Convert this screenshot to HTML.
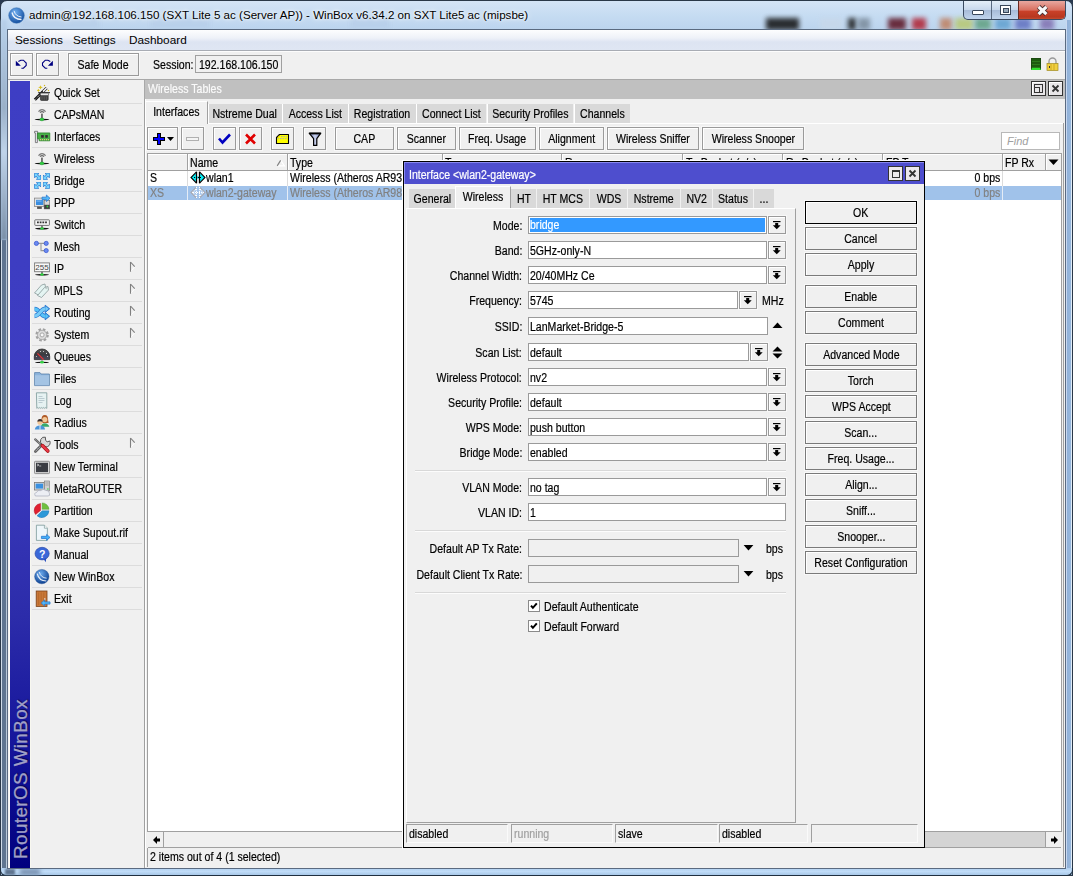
<!DOCTYPE html>
<html><head><meta charset="utf-8">
<style>
*{box-sizing:border-box;margin:0;padding:0}
html,body{width:1073px;height:876px;overflow:hidden;background:#2a3a50}
body{position:relative;font-family:"Liberation Sans",sans-serif;font-size:10.7px;color:#000;line-height:1}
.a{position:absolute}
.t{position:absolute;white-space:nowrap;line-height:13px}
.s{display:inline-block;font-size:12px;transform:scaleX(0.88);-webkit-text-stroke:0.2px currentColor}
.s.l{transform-origin:0 50%}.s.c{transform-origin:50% 50%}.s.r{transform-origin:100% 50%}
.btn{position:absolute;background:#f0f0f0;border:1px solid #9a9a9a;box-shadow:inset 1px 1px 0 #fff,0 0 0 1px #f8f8f8;text-align:center;white-space:nowrap}
svg{position:absolute;overflow:visible}
</style></head><body>
<div class="a" style="left:0px;top:0px;width:1073px;height:876px;background:linear-gradient(#d4e4f6,#c6dcf2 14px,#bcd4ee 28px,#aac6e6 100px,#aac6e6 100%);border:1px solid #2a3848;border-radius:7px 7px 0 0"></div>
<div class="a" style="left:20px;top:18px;width:80px;height:12px;background:#b8d0ea;filter:blur(2.5px);opacity:.85"></div>
<div class="a" style="left:150px;top:18px;width:60px;height:12px;background:#b8d0ea;filter:blur(2.5px);opacity:.85"></div>
<div class="a" style="left:350px;top:18px;width:40px;height:12px;background:#b8d0ea;filter:blur(2.5px);opacity:.85"></div>
<div class="a" style="left:766px;top:18px;width:33px;height:12px;background:#101010;filter:blur(2.5px);opacity:.85"></div>
<div class="a" style="left:820px;top:18px;width:22px;height:12px;background:#c8d8ea;filter:blur(2.5px);opacity:.85"></div>
<div class="a" style="left:848px;top:18px;width:8px;height:12px;background:#181818;filter:blur(2.5px);opacity:.85"></div>
<div class="a" style="left:858px;top:18px;width:12px;height:12px;background:#7a8a9a;filter:blur(2.5px);opacity:.85"></div>
<div class="a" style="left:888px;top:18px;width:18px;height:12px;background:#5a1020;filter:blur(2.5px);opacity:.85"></div>
<div class="a" style="left:912px;top:18px;width:14px;height:12px;background:#b02030;filter:blur(2.5px);opacity:.85"></div>
<div class="a" style="left:940px;top:18px;width:12px;height:12px;background:#c08060;filter:blur(2.5px);opacity:.85"></div>
<div class="a" style="left:955px;top:18px;width:18px;height:12px;background:#b8c870;filter:blur(2.5px);opacity:.85"></div>
<div class="a" style="left:975px;top:18px;width:16px;height:12px;background:#60a080;filter:blur(2.5px);opacity:.85"></div>
<div class="a" style="left:995px;top:18px;width:16px;height:12px;background:#60a0d0;filter:blur(2.5px);opacity:.85"></div>
<div class="a" style="left:1015px;top:18px;width:16px;height:12px;background:#6070c0;filter:blur(2.5px);opacity:.85"></div>
<div class="a" style="left:1040px;top:18px;width:14px;height:12px;background:#8070b0;filter:blur(2.5px);opacity:.85"></div>
<div class="a" style="left:1px;top:240px;width:6px;height:628px;background:linear-gradient(90deg,#d0dce8 0,#d0dce8 1px,#5f7590 1px,#5f7590 5px,#b8c8d8 5px,#b8c8d8 6px)"></div>
<div class="a" style="left:1px;top:20px;width:6px;height:220px;background:linear-gradient(#b8d0ea,#9ab0c8 40%,#c0d4ea 60%,#7a90a8 100%);filter:blur(1px)"></div>
<div class="a" style="left:1066px;top:20px;width:6px;height:848px;background:linear-gradient(90deg,#c8d8f0 0,#c8d8f0 1px,#90b0d8 1px,#98b8dc 5px,#e0ecf8 5px)"></div>
<div class="a" style="left:0px;top:868px;width:1073px;height:8px;background:linear-gradient(#b0d0f0,#c0dcf8 50%,#a8c8e8);border-bottom:1px solid #203040;border-left:1px solid #203040;border-right:1px solid #203040;border-radius:0 0 6px 6px"></div>
<div class="a" style="left:5px;top:869px;width:10px;height:6px;background:#5f7590;filter:blur(1px)"></div>
<div class="a" style="left:20px;top:869px;width:20px;height:6px;background:#7890b0;filter:blur(2px)"></div>
<svg style="left:8px;top:7px" width="17" height="17" viewBox="0 0 17 17"><defs><radialGradient id="g1" cx="40%" cy="30%" r="70%"><stop offset="0" stop-color="#70aef0"/><stop offset="1" stop-color="#1450a0"/></radialGradient></defs><circle cx="8.5" cy="8.5" r="7.8" fill="url(#g1)" stroke="#3a70b0" stroke-width=".5"/><path d="M4 5.5 Q5.5 12.5 13.5 12.5" stroke="#f0f4fa" stroke-width="1.3" fill="none"/><path d="M6 3.8 Q7.5 9.5 13.5 10" stroke="#f0f4fa" stroke-width="1" fill="none"/></svg>
<div class="t" style="left:29px;top:8px;font-size:11.6px;color:#000;text-shadow:0 0 6px #fff,0 0 3px #fff">admin@192.168.106.150 (SXT Lite 5 ac (Server AP)) - WinBox v6.34.2 on SXT Lite5 ac (mipsbe)</div>
<div class="a" style="left:963px;top:1px;width:103px;height:19px;border:1px solid #3a4a60;border-top:none;border-radius:0 0 5px 5px;overflow:hidden;background:linear-gradient(#e4eef8,#c8d8ec 48%,#a8bcd8 52%,#c0d4ec)">
 <div class="a" style="left:27px;top:0;width:1px;height:20px;background:#5a6a80"></div>
 <div class="a" style="left:54px;top:0;width:48px;height:20px;background:linear-gradient(#e8a8a0,#d87060 45%,#c84028 52%,#b83820 80%,#d06040);border-left:1px solid #6a2a20"></div>
 <div class="a" style="left:8px;top:9px;width:12px;height:5px;background:#fff;border:1px solid #39475a;border-radius:1px"></div>
 <div class="a" style="left:36px;top:4px;width:11px;height:10px;background:#fff;border:1px solid #39475a"></div>
 <div class="a" style="left:38.5px;top:6.5px;width:6px;height:5px;background:#9ab;border:1px solid #39475a"></div>
</div>
<svg style="left:1018px;top:4px" width="48" height="16"><path d="M20.6 2.8 L28.4 10.2 M28.4 2.8 L20.6 10.2" stroke="#4a3030" stroke-width="5"/><path d="M20.6 2.8 L28.4 10.2 M28.4 2.8 L20.6 10.2" stroke="#f8f8f8" stroke-width="3.2"/></svg>
<div class="a" style="left:7px;top:29px;width:1059px;height:840px;background:#f0f0f0;border:1px solid #5a6a80"></div>
<div class="a" style="left:8px;top:30px;width:1057px;height:20px;background:linear-gradient(#fdfdfe,#eef1f8 40%,#dde4f2 60%,#dfe6f3)"></div>
<div class="a" style="left:8px;top:50px;width:1057px;height:1px;background:#a8acb4"></div>
<div class="a" style="left:8px;top:51px;width:1057px;height:1px;background:#fcfcfc"></div>
<div class="t" style="left:15px;top:34px;font-size:11.8px;">Sessions</div>
<div class="t" style="left:73px;top:34px;font-size:11.8px;">Settings</div>
<div class="t" style="left:129px;top:34px;font-size:11.8px;">Dashboard</div>
<div class="btn" style="left:10px;top:53px;width:23px;height:23px"></div>
<div class="btn" style="left:36px;top:53px;width:23px;height:23px"></div>
<svg style="left:15px;top:58px" width="14" height="13"><path d="M3.4 3.6 L5.8 2.2 H8.4 L11.2 5 V7.4 L8.4 10.2 H6.4" stroke="#000080" stroke-width="1.1" fill="none"/><path d="M0.8 2.7 V7.7 H5.8z" fill="#000080"/></svg>
<svg style="left:41px;top:58px" width="14" height="13"><g transform="translate(12.7 0) scale(-1 1)"><path d="M3.4 3.6 L5.8 2.2 H8.4 L11.2 5 V7.4 L8.4 10.2 H6.4" stroke="#000080" stroke-width="1.1" fill="none"/><path d="M0.8 2.7 V7.7 H5.8z" fill="#000080"/></g></svg>
<div class="btn" style="left:68px;top:53px;width:71px;height:23px;line-height:21px;padding-top:1px"><span class="s c">Safe Mode</span></div>
<div class="t" style="left:153px;top:59px;"><span class="s l">Session:</span></div>
<div class="a" style="left:195px;top:55px;width:87px;height:18px;border:1px solid #a0a0a0;background:#f0f0f0;line-height:16px;padding-left:3px;padding-top:1px;white-space:nowrap"><span class="s l">192.168.106.150</span></div>
<div class="a" style="left:1031px;top:58px;width:10px;height:12px;background:repeating-linear-gradient(#1d5a10 0 2px,#2c7a1c 2px 3px);border:1px solid #1a4a10;border-bottom:2px solid #30e030"></div>
<svg style="left:1046px;top:57px" width="13" height="14"><path d="M3 7 V4.5 A3.5 3.5 0 0 1 10 4.5 V7" stroke="#999" stroke-width="1.3" fill="none"/><rect x="1" y="6.5" width="11" height="7" fill="#f0d040" stroke="#a08a20" stroke-width=".7"/><path d="M5 7v6M8 7v6" stroke="#c8a020" stroke-width=".8"/><rect x="3" y="9" width="1" height="2" fill="#333"/></svg>
<div class="a" style="left:8px;top:79px;width:1057px;height:1px;background:#a8a8a8"></div>
<div class="a" style="left:9px;top:81px;width:1px;height:787px;background:#fafaf5"></div>
<div class="a" style="left:10px;top:81px;width:20px;height:787px;background:linear-gradient(#3e3ec4,#3c3cc0 45%,#2c2caa 68%,#14149a 85%,#00007e 100%)"></div>
<div class="a" style="left:30px;top:81px;width:1px;height:787px;background:#f8f8f0"></div>
<div class="t" style="left:-59px;top:767px;width:160px;height:24px;transform:rotate(-90deg);color:#a0a0c8;font-size:18.8px;line-height:24px;text-align:center;letter-spacing:0.42px;-webkit-text-stroke:0.3px #a0a0c8;text-shadow:1px 1px 1px rgba(0,0,40,.6)">RouterOS WinBox</div>
<svg style="left:34px;top:84px" width="16" height="16" viewBox="0 0 16 16"><path d="M0.8 15.8 L12.6 4" stroke="#111" stroke-width="2.8"/><path d="M0.8 15.8 L7 9.6" stroke="#eee" stroke-width="1" stroke-dasharray="1 1"/><path d="M9 7.6 L12.6 4" stroke="#f4f4f4" stroke-width="1.6"/>
<rect x="6.4" y="8.8" width="7.8" height="7.6" rx="1" fill="#444" stroke="#222" stroke-width=".6"/><rect x="6.6" y="9.2" width="7.4" height="2" fill="#e8e8e8"/><rect x="4.2" y="8.1" width="11.8" height="1.1" fill="#333"/><path d="M8 12.5 v3.3 M10.3 12.5 v3.3 M12.5 12.5 v3.3" stroke="#666" stroke-width=".6"/>
<path d="M6.5 1.2 L7.2 2.7 L8.9 3.3 L7.2 3.9 L6.5 5.5 L5.8 3.9 L4.1 3.3 L5.8 2.7z" fill="#d8c020"/><path d="M4.4 4.8 L5 5.7 L6 6.3 L5 6.9 L4.4 7.9 L3.8 6.9 L2.8 6.3 L3.8 5.7z" fill="#d8c020"/><circle cx="10.5" cy="1.5" r=".7" fill="#d0b820"/><circle cx="14.5" cy="6.5" r=".7" fill="#d0b820"/></svg>
<div class="t" style="left:54px;top:87px;"><span class="s l">Quick Set</span></div>
<div class="a" style="left:32px;top:103px;width:110px;height:1px;background:#dcdcdc"></div>
<svg style="left:34px;top:106px" width="16" height="16" viewBox="0 0 16 16"><path d="M4.5 5.6 Q8 1.6 11.6 5.6" stroke="#777" stroke-width="1.3" fill="none"/><path d="M6 6.6 Q8 4.6 10.1 6.6" stroke="#666" stroke-width="1.2" fill="none"/>
<rect x="7" y="7.6" width="1.9" height="4.8" fill="#707070"/><ellipse cx="8" cy="13.5" rx="7.4" ry="0.8" fill="#111"/><ellipse cx="7.9" cy="13.4" rx="2" ry="1.4" fill="#30d040" stroke="#20a030" stroke-width=".5"/></svg>
<div class="t" style="left:54px;top:109px;"><span class="s l">CAPsMAN</span></div>
<div class="a" style="left:32px;top:125px;width:110px;height:1px;background:#dcdcdc"></div>
<svg style="left:34px;top:128px" width="16" height="16" viewBox="0 0 16 16"><path d="M0.6 3.3 H3.6 V5 H3.4 V14.6 H1.4 V5 H0.6z" fill="#e8e8f0" stroke="#666" stroke-width=".8"/>
<path d="M3.6 4.9 H15.8 V12.8 H5.2 V10.8 H3.6z" fill="#48b048" stroke="#1e7a1e" stroke-width=".7"/>
<rect x="7.1" y="7.1" width="2.7" height="2.6" fill="#332830"/><rect x="11.2" y="7.1" width="2.6" height="2.6" fill="#332830"/><path d="M5.9 11.7 h9.2" stroke="#e8c880" stroke-width="1.3" stroke-dasharray="1 1"/></svg>
<div class="t" style="left:54px;top:131px;"><span class="s l">Interfaces</span></div>
<div class="a" style="left:32px;top:147px;width:110px;height:1px;background:#dcdcdc"></div>
<svg style="left:34px;top:150px" width="16" height="16" viewBox="0 0 16 16"><path d="M4.5 5.6 Q8 1.6 11.6 5.6" stroke="#777" stroke-width="1.3" fill="none"/><path d="M6 6.6 Q8 4.6 10.1 6.6" stroke="#666" stroke-width="1.2" fill="none"/>
<rect x="7" y="7.6" width="1.9" height="4.8" fill="#707070"/><ellipse cx="8" cy="13.5" rx="7.4" ry="0.8" fill="#111"/><ellipse cx="7.9" cy="13.4" rx="2" ry="1.4" fill="#30d040" stroke="#20a030" stroke-width=".5"/></svg>
<div class="t" style="left:54px;top:153px;"><span class="s l">Wireless</span></div>
<div class="a" style="left:32px;top:169px;width:110px;height:1px;background:#dcdcdc"></div>
<svg style="left:34px;top:172px" width="16" height="16" viewBox="0 0 16 16"><g transform="translate(0.2 1) scale(1 1)"><g fill="#2a78d0" stroke="#2a78d0" stroke-width="1.1" stroke-linejoin="round"><path d="M0.5 0.5 L4.3 0.5 L0.5 4.3z M6.3 6.3 L2.5 6.3 L6.3 2.5z"/><path d="M1.8 1.8 L5 5" stroke-width="2.7"/></g><g fill="#78d4fc" stroke="#78d4fc"><path stroke="none" d="M0.5 0.5 L4.3 0.5 L0.5 4.3z M6.3 6.3 L2.5 6.3 L6.3 2.5z"/><path d="M1.8 1.8 L5 5" stroke-width="1.6"/></g></g><g transform="translate(15.8 1) scale(-1 1)"><g fill="#2a78d0" stroke="#2a78d0" stroke-width="1.1" stroke-linejoin="round"><path d="M0.5 0.5 L4.3 0.5 L0.5 4.3z M6.3 6.3 L2.5 6.3 L6.3 2.5z"/><path d="M1.8 1.8 L5 5" stroke-width="2.7"/></g><g fill="#78d4fc" stroke="#78d4fc"><path stroke="none" d="M0.5 0.5 L4.3 0.5 L0.5 4.3z M6.3 6.3 L2.5 6.3 L6.3 2.5z"/><path d="M1.8 1.8 L5 5" stroke-width="1.6"/></g></g><g transform="translate(0.2 16.8) scale(1 -1)"><g fill="#2a78d0" stroke="#2a78d0" stroke-width="1.1" stroke-linejoin="round"><path d="M0.5 0.5 L4.3 0.5 L0.5 4.3z M6.3 6.3 L2.5 6.3 L6.3 2.5z"/><path d="M1.8 1.8 L5 5" stroke-width="2.7"/></g><g fill="#78d4fc" stroke="#78d4fc"><path stroke="none" d="M0.5 0.5 L4.3 0.5 L0.5 4.3z M6.3 6.3 L2.5 6.3 L6.3 2.5z"/><path d="M1.8 1.8 L5 5" stroke-width="1.6"/></g></g><g transform="translate(15.8 16.8) scale(-1 -1)"><g fill="#2a78d0" stroke="#2a78d0" stroke-width="1.1" stroke-linejoin="round"><path d="M0.5 0.5 L4.3 0.5 L0.5 4.3z M6.3 6.3 L2.5 6.3 L6.3 2.5z"/><path d="M1.8 1.8 L5 5" stroke-width="2.7"/></g><g fill="#78d4fc" stroke="#78d4fc"><path stroke="none" d="M0.5 0.5 L4.3 0.5 L0.5 4.3z M6.3 6.3 L2.5 6.3 L6.3 2.5z"/><path d="M1.8 1.8 L5 5" stroke-width="1.6"/></g></g></svg>
<div class="t" style="left:54px;top:175px;"><span class="s l">Bridge</span></div>
<div class="a" style="left:32px;top:191px;width:110px;height:1px;background:#dcdcdc"></div>
<svg style="left:34px;top:194px" width="16" height="16" viewBox="0 0 16 16"><rect x="0.4" y="4.1" width="9.6" height="8.4" fill="#e4e4e4" stroke="#888" stroke-width=".8"/><rect x="2" y="5.9" width="7.2" height="5.1" fill="#3a8ee0"/><rect x="2.5" y="6.6" width="5" height="1" fill="#80b8f0"/><rect x="3.1" y="12.6" width="4.7" height="2.3" fill="#555"/>
<rect x="10.2" y="6.3" width="5.5" height="8.6" fill="#d8d8d8" stroke="#666" stroke-width=".6"/><rect x="10.2" y="10.8" width="5.5" height="4.1" fill="#404040"/><circle cx="13.4" cy="12.5" r=".9" fill="#30d040"/><path d="M8 3.15 H12.4 V1.0 L16 4.3 L12.4 7.6 V5.449999999999999 H8z" fill="#50b8f8" stroke="#2a78d0" stroke-width=".8" stroke-linejoin="round"/></svg>
<div class="t" style="left:54px;top:197px;"><span class="s l">PPP</span></div>
<div class="a" style="left:32px;top:213px;width:110px;height:1px;background:#dcdcdc"></div>
<svg style="left:34px;top:216px" width="16" height="16" viewBox="0 0 16 16"><rect x="0.8" y="3.8" width="14.6" height="5.6" rx=".6" fill="#f6f6f6" stroke="#666" stroke-width=".9"/><path d="M3 6.4 h10" stroke="#333" stroke-width="1.6" stroke-dasharray="1.8 0.9"/>
<rect x="7.2" y="9.4" width="1.6" height="2.6" fill="#666"/><ellipse cx="8" cy="12.6" rx="7" ry=".8" fill="#111"/><ellipse cx="8" cy="12.5" rx="1.7" ry="1.2" fill="#30d040"/></svg>
<div class="t" style="left:54px;top:219px;"><span class="s l">Switch</span></div>
<div class="a" style="left:32px;top:235px;width:110px;height:1px;background:#dcdcdc"></div>
<svg style="left:34px;top:238px" width="16" height="16" viewBox="0 0 16 16"><path d="M2.4 5.4 H12.2 M7 5.4 V12.6 H12.2" stroke="#999" stroke-width="1.1" fill="none"/><g fill="#6a8af0" stroke="#3050d0" stroke-width=".7"><circle cx="2.4" cy="5.4" r="2.1"/><circle cx="12.2" cy="5.4" r="2.1"/><circle cx="12.2" cy="12.6" r="2.1"/></g></svg>
<div class="t" style="left:54px;top:241px;"><span class="s l">Mesh</span></div>
<div class="a" style="left:32px;top:257px;width:110px;height:1px;background:#dcdcdc"></div>
<svg style="left:34px;top:260px" width="16" height="16" viewBox="0 0 16 16"><rect x="0.6" y="2.9" width="14.8" height="8.8" fill="#f8f8f8" stroke="#777" stroke-width=".9"/><text x="8" y="10" font-size="8" text-anchor="middle" fill="#444" font-family="Liberation Sans">255</text>
<rect x="7.2" y="11.7" width="1.6" height="2.4" fill="#666"/><ellipse cx="8" cy="14.7" rx="7" ry=".8" fill="#111"/><ellipse cx="8" cy="14.5" rx="1.7" ry="1.2" fill="#30d040"/></svg>
<div class="t" style="left:54px;top:263px;"><span class="s l">IP</span></div>
<div class="a" style="left:32px;top:279px;width:110px;height:1px;background:#dcdcdc"></div>
<svg style="left:128px;top:261px" width="10" height="14"><path d="M2.5 10.7 L6.7 5.9" stroke="#fff" stroke-width="1"/><path d="M2.5 1 V10.7 M2.5 1 L6.7 5.7" stroke="#808080" stroke-width="1.1" fill="none"/></svg>
<svg style="left:34px;top:282px" width="16" height="16" viewBox="0 0 16 16"><g fill="#e4f4f2" stroke="#8a9a9a" stroke-width=".8" stroke-linejoin="round"><path d="M0.5 11 L7.5 3 L11 2 L11.5 5.5 L4.5 13z"/><path d="M3.5 13.5 L10.5 5.5 L14 4.5 L14.5 8 L7.5 15.5z"/></g><circle cx="12.3" cy="6" r=".7" fill="#fff" stroke="#899" stroke-width=".5"/></svg>
<div class="t" style="left:54px;top:285px;"><span class="s l">MPLS</span></div>
<div class="a" style="left:32px;top:301px;width:110px;height:1px;background:#dcdcdc"></div>
<svg style="left:128px;top:283px" width="10" height="14"><path d="M2.5 10.7 L6.7 5.9" stroke="#fff" stroke-width="1"/><path d="M2.5 1 V10.7 M2.5 1 L6.7 5.7" stroke="#808080" stroke-width="1.1" fill="none"/></svg>
<svg style="left:34px;top:304px" width="16" height="16" viewBox="0 0 16 16"><path d="M0.6 5 C5.5 5, 6.5 12.4, 11.6 12.4" stroke="#2a78d0" stroke-width="4.4" fill="none"/><path d="M11.2 8.6 L15.6 12.2 L11.2 15.8z" fill="#2a78d0" stroke="#2a78d0" stroke-width="1" stroke-linejoin="round"/>
<path d="M0.6 5 C5.5 5, 6.5 12.4, 11.6 12.4" stroke="#58c4f8" stroke-width="3" fill="none"/><path d="M11.6 9.6 L14.6 12.2 L11.6 14.8z" fill="#58c4f8"/>
<path d="M0.6 12 C5.5 12, 6.5 4.8, 11.6 4.8" stroke="#2a78d0" stroke-width="4.4" fill="none"/><path d="M11.2 1.2 L15.6 4.8 L11.2 8.4z" fill="#2a78d0" stroke="#2a78d0" stroke-width="1" stroke-linejoin="round"/>
<path d="M0.6 12 C5.5 12, 6.5 4.8, 11.6 4.8" stroke="#78ccf8" stroke-width="3" fill="none"/><path d="M11.6 2.2 L14.6 4.8 L11.6 7.4z" fill="#78ccf8"/></svg>
<div class="t" style="left:54px;top:307px;"><span class="s l">Routing</span></div>
<div class="a" style="left:32px;top:323px;width:110px;height:1px;background:#dcdcdc"></div>
<svg style="left:128px;top:305px" width="10" height="14"><path d="M2.5 10.7 L6.7 5.9" stroke="#fff" stroke-width="1"/><path d="M2.5 1 V10.7 M2.5 1 L6.7 5.7" stroke="#808080" stroke-width="1.1" fill="none"/></svg>
<svg style="left:34px;top:326px" width="16" height="16" viewBox="0 0 16 16"><g transform="translate(8.1 8.9)"><circle r="5.2" fill="#d8d8d8" stroke="#a0a0a0" stroke-width="3" stroke-dasharray="2.4 1.7"/><circle r="4.6" fill="#dcdcdc" stroke="#a8a8a8" stroke-width=".8"/><circle r="2" fill="#f8f8f8" stroke="#999" stroke-width=".8"/></g></svg>
<div class="t" style="left:54px;top:329px;"><span class="s l">System</span></div>
<div class="a" style="left:32px;top:345px;width:110px;height:1px;background:#dcdcdc"></div>
<svg style="left:128px;top:327px" width="10" height="14"><path d="M2.5 10.7 L6.7 5.9" stroke="#fff" stroke-width="1"/><path d="M2.5 1 V10.7 M2.5 1 L6.7 5.7" stroke="#808080" stroke-width="1.1" fill="none"/></svg>
<svg style="left:34px;top:348px" width="16" height="16" viewBox="0 0 16 16"><defs><linearGradient id="qg" x1="0" y1="0" x2="0" y2="1"><stop offset="0" stop-color="#555"/><stop offset=".5" stop-color="#3a3a3e"/><stop offset="1" stop-color="#4a4a60"/></linearGradient></defs><path d="M0.3 11.6 V8.4 A7.7 7.4 0 0 1 15.7 8.4 V11.6z" fill="url(#qg)" stroke="#1a1a1a" stroke-width=".7"/>
<g fill="#ddd"><circle cx="2.4" cy="8.5" r=".55"/><circle cx="6.5" cy="3.5" r=".55"/><circle cx="9.5" cy="3.5" r=".55"/><circle cx="12.5" cy="5.4" r=".55"/><circle cx="13.6" cy="8.5" r=".55"/></g>
<path d="M3.4 5.4 L9.6 11.6" stroke="#e83030" stroke-width="1.3"/><rect x="7.3" y="11.8" width="1.4" height="1.8" fill="#999"/><ellipse cx="8" cy="14.4" rx="7" ry=".7" fill="#111"/><ellipse cx="8" cy="14.3" rx="2" ry="1.3" fill="#30d040"/></svg>
<div class="t" style="left:54px;top:351px;"><span class="s l">Queues</span></div>
<div class="a" style="left:32px;top:367px;width:110px;height:1px;background:#dcdcdc"></div>
<svg style="left:34px;top:370px" width="16" height="16" viewBox="0 0 16 16"><path d="M0.6 2.6 H6 L7 4 H15.4 V15.6 H0.6z" fill="#8cb4dc" stroke="#5a82aa" stroke-width=".8"/><rect x="1" y="5.2" width="14" height="10" fill="#a4c4e4"/></svg>
<div class="t" style="left:54px;top:373px;"><span class="s l">Files</span></div>
<div class="a" style="left:32px;top:389px;width:110px;height:1px;background:#dcdcdc"></div>
<svg style="left:34px;top:392px" width="16" height="16" viewBox="0 0 16 16"><path d="M2.4 0.8 H12.8 V16.4 l-1 -.9 -1 .9 -1 -.9 -1 .9 -1 -.9 -1 .9 -1 -.9 -1 .9 -1 -.9 -1 .9z" fill="#e6f2f2" stroke="#7a9898" stroke-width=".8"/><path d="M4.5 4.5h4M4.5 6.5h6M4.5 8.5h6M4.5 10.5h4" stroke="#b0c0c8" stroke-width=".8"/></svg>
<div class="t" style="left:54px;top:395px;"><span class="s l">Log</span></div>
<div class="a" style="left:32px;top:411px;width:110px;height:1px;background:#dcdcdc"></div>
<svg style="left:34px;top:414px" width="16" height="16" viewBox="0 0 16 16"><path d="M7.4 6.2 Q7.4 1 10.8 1 Q14.2 1 14.2 6.2 L14.6 9 H7z" fill="#b05a28"/><circle cx="10.8" cy="5.6" r="2.6" fill="#f2c898"/><path d="M7 12.8 Q7.4 9.2 10.8 9.2 Q14.2 9.2 15.4 12.8z" fill="#38a868"/>
<circle cx="6" cy="8.2" r="2.6" fill="#f2c898"/><path d="M3.4 7.8 Q3.4 5 6 5 Q8.6 5 8.6 7.8 Q6 6.6 3.4 7.8z" fill="#3a3030"/><path d="M0.8 15.6 Q1.4 11.4 6 11.4 Q10.6 11.4 11 15.6z" fill="#4a94d8"/><path d="M6 11.6 v4" stroke="#fff" stroke-width=".8"/></svg>
<div class="t" style="left:54px;top:417px;"><span class="s l">Radius</span></div>
<div class="a" style="left:32px;top:433px;width:110px;height:1px;background:#dcdcdc"></div>
<svg style="left:34px;top:436px" width="16" height="16" viewBox="0 0 16 16"><path d="M1.2 3.4 L7.6 9.2" stroke="#606060" stroke-width="2.2" stroke-linecap="round"/><path d="M1.2 3.4 L7.6 9.2" stroke="#e0e0e0" stroke-width=".7" stroke-dasharray="1 .8"/>
<path d="M1.4 15.4 L9 7.8" stroke="#606060" stroke-width="2.8" stroke-linecap="round"/><path d="M1.6 15.2 L8.8 8" stroke="#e8e8f0" stroke-width="1" stroke-dasharray="1 .8"/>
<path d="M8.2 8.4 A4 4 0 0 1 11.4 1.2 L11.6 4.4 L13.2 5.8 L15.8 5 A4 4 0 0 1 8.2 8.4z" fill="#d8d8d8" stroke="#5a5a5a" stroke-width="1" stroke-linejoin="round"/>
<path d="M8.4 9.6 L13.8 15" stroke="#a01010" stroke-width="3.6" stroke-linecap="round"/><path d="M8.4 9.6 L13.8 15" stroke="#e83848" stroke-width="2.2" stroke-linecap="round"/></svg>
<div class="t" style="left:54px;top:439px;"><span class="s l">Tools</span></div>
<div class="a" style="left:32px;top:455px;width:110px;height:1px;background:#dcdcdc"></div>
<svg style="left:128px;top:437px" width="10" height="14"><path d="M2.5 10.7 L6.7 5.9" stroke="#fff" stroke-width="1"/><path d="M2.5 1 V10.7 M2.5 1 L6.7 5.7" stroke="#808080" stroke-width="1.1" fill="none"/></svg>
<svg style="left:34px;top:458px" width="16" height="16" viewBox="0 0 16 16"><rect x="0.5" y="3.3" width="15" height="12.3" rx=".8" fill="#d8d8d8" stroke="#888" stroke-width=".9"/><rect x="2" y="4.8" width="12" height="9.3" fill="#3a3c42"/><path d="M3 6 l2 1 -2 1M5.2 8h2" stroke="#e0e0e0" stroke-width=".7" fill="none"/></svg>
<div class="t" style="left:54px;top:461px;"><span class="s l">New Terminal</span></div>
<div class="a" style="left:32px;top:477px;width:110px;height:1px;background:#dcdcdc"></div>
<svg style="left:34px;top:480px" width="16" height="16" viewBox="0 0 16 16"><rect x="0.5" y="2.4" width="9.6" height="7.6" fill="#e0e0e0" stroke="#777" stroke-width=".8"/><rect x="1.6" y="3.6" width="7.4" height="5" fill="#3a90e0"/><rect x="10.6" y="1" width="5" height="10" fill="#d0d0d0" stroke="#777" stroke-width=".6"/><path d="M11.4 3h3.4M11.4 5h3.4" stroke="#888" stroke-width=".6"/><circle cx="13.9" cy="9" r=".7" fill="#30d040"/>
<path d="M1.4 16 Q-0.4 13 2.6 12.4 Q3.6 9.6 6.8 10.6 Q9 8.2 12 10.4 Q15.6 10.4 15.4 13.4 Q16.4 16 14 16z" fill="#eceef4" stroke="#9aa0b0" stroke-width=".6"/></svg>
<div class="t" style="left:54px;top:483px;"><span class="s l">MetaROUTER</span></div>
<div class="a" style="left:32px;top:499px;width:110px;height:1px;background:#dcdcdc"></div>
<svg style="left:34px;top:502px" width="16" height="16" viewBox="0 0 16 16"><path d="M6.6 1.4 A7 7 0 0 0 1.6 12.6 L6.6 8.4z" fill="#e02030" stroke="#a01020" stroke-width=".4"/><path d="M8.2 0.9 A7 7 0 0 1 15 7.3 L8.2 7.3z" fill="#70c040" stroke="#409020" stroke-width=".4"/><path d="M15 8.8 A7.2 7.2 0 0 1 3 13.8 L8.2 8.8z" fill="#2c98d8" stroke="#1868a8" stroke-width=".4"/></svg>
<div class="t" style="left:54px;top:505px;"><span class="s l">Partition</span></div>
<div class="a" style="left:32px;top:521px;width:110px;height:1px;background:#dcdcdc"></div>
<svg style="left:34px;top:524px" width="16" height="16" viewBox="0 0 16 16"><path d="M2.4 1.2 H10.4 L13.4 4.2 V16.4 H2.4z" fill="#eef6fa" stroke="#7a9898" stroke-width=".8"/><path d="M10.4 1.2 V4.2 H13.4" fill="#fff" stroke="#7a9898" stroke-width=".7"/><path d="M7.4 12.3 H12.6 V10.4 L16 13.4 L12.6 16.4 V14.5 H7.4z" fill="#40b0f8" stroke="#2a78d0" stroke-width=".8" stroke-linejoin="round"/></svg>
<div class="t" style="left:54px;top:527px;"><span class="s l">Make Supout.rif</span></div>
<div class="a" style="left:32px;top:543px;width:110px;height:1px;background:#dcdcdc"></div>
<svg style="left:34px;top:546px" width="16" height="16" viewBox="0 0 16 16"><ellipse cx="8.1" cy="7.6" rx="7.1" ry="6.3" fill="#3a68d8" stroke="#2040a0" stroke-width=".6"/><path d="M9.5 13 L11.8 16.2 L12.2 12z" fill="#2a50c0"/><text x="8.1" y="11.6" font-size="10.5" font-weight="bold" text-anchor="middle" fill="#fff" font-family="Liberation Sans">?</text></svg>
<div class="t" style="left:54px;top:549px;"><span class="s l">Manual</span></div>
<div class="a" style="left:32px;top:565px;width:110px;height:1px;background:#dcdcdc"></div>
<svg style="left:34px;top:568px" width="16" height="16" viewBox="0 0 16 16"><defs><radialGradient id="wbg" cx="40%" cy="30%" r="70%"><stop offset="0" stop-color="#70aef0"/><stop offset="1" stop-color="#0c4090"/></radialGradient></defs><circle cx="7.8" cy="8.6" r="7.2" fill="url(#wbg)" stroke="#1a4a90" stroke-width=".4"/><path d="M3.2 5.6 Q4.8 12.8 12.4 13" stroke="#e8eef8" stroke-width="1.2" fill="none"/><path d="M5.2 4 Q7 9.8 12.6 10.2" stroke="#e8eef8" stroke-width=".9" fill="none"/></svg>
<div class="t" style="left:54px;top:571px;"><span class="s l">New WinBox</span></div>
<div class="a" style="left:32px;top:587px;width:110px;height:1px;background:#dcdcdc"></div>
<svg style="left:34px;top:590px" width="16" height="16" viewBox="0 0 16 16"><rect x="2.2" y="1" width="10.8" height="15.4" fill="#c87838" stroke="#7a4018" stroke-width=".8"/><path d="M4.6 2.5v12.5M7.2 2.5v12.5M9.8 2.5v12.5" stroke="#a85c20" stroke-width=".5"/><circle cx="10.8" cy="9" r=".8" fill="#f0f0f0"/><path d="M16 11.9 H10.6 V10 L7.2 13 L10.6 16 V14.1 H16z" fill="#50b8f8" stroke="#2a78d0" stroke-width=".8" stroke-linejoin="round"/></svg>
<div class="t" style="left:54px;top:593px;"><span class="s l">Exit</span></div>
<div class="a" style="left:32px;top:609px;width:110px;height:1px;background:#dcdcdc"></div>
<div class="a" style="left:144px;top:80px;width:1px;height:788px;background:#a8a8a8"></div>
<div class="a" style="left:145px;top:80px;width:920px;height:19px;background:#c0c0c0"></div>
<div class="t" style="left:148px;top:83px;color:#fafafa"><span class="s l">Wireless Tables</span></div>
<div class="a" style="left:1031px;top:81px;width:15px;height:15px;background:#e8e6e8;border:1px solid #333;box-shadow:inset 1px 1px 0 #fff"></div>
<svg style="left:1031px;top:81px" width="15" height="15"><rect x="3.5" y="3.5" width="8" height="8" fill="none" stroke="#333" stroke-width="1"/><rect x="3.5" y="6.5" width="5" height="5" fill="none" stroke="#333" stroke-width="1"/></svg>
<div class="a" style="left:1048px;top:81px;width:15px;height:15px;background:#e8e6e8;border:1px solid #333;box-shadow:inset 1px 1px 0 #fff"></div>
<svg style="left:1048px;top:81px" width="15" height="15"><path d="M4.5 4.5 L10.5 10.5 M10.5 4.5 L4.5 10.5" stroke="#333" stroke-width="1.8"/></svg>
<div class="a" style="left:144px;top:99px;width:1px;height:768px;background:#a0a0a0"></div>
<div class="a" style="left:145px;top:99px;width:1px;height:768px;background:#fff"></div>
<div class="a" style="left:1063px;top:123px;width:1px;height:744px;background:#a0a0a0"></div>
<div class="a" style="left:145px;top:101px;width:63px;height:23px;background:#f0f0f0;border-left:1px solid #fff;border-top:1px solid #fff;border-right:1px solid #a0a0a0"></div>
<div class="t" style="left:145px;top:106px;width:63px;text-align:center"><span class="s c">Interfaces</span></div>
<div class="a" style="left:208px;top:104px;width:74px;height:19px;background:#d9d9d9;border-left:1px solid #fff"></div>
<div class="t" style="left:208px;top:108px;width:74px;text-align:center"><span class="s c">Nstreme Dual</span></div>
<div class="a" style="left:282px;top:104px;width:66px;height:19px;background:#d9d9d9;border-left:1px solid #fff"></div>
<div class="t" style="left:282px;top:108px;width:66px;text-align:center"><span class="s c">Access List</span></div>
<div class="a" style="left:348px;top:104px;width:68px;height:19px;background:#d9d9d9;border-left:1px solid #fff"></div>
<div class="t" style="left:348px;top:108px;width:68px;text-align:center"><span class="s c">Registration</span></div>
<div class="a" style="left:416px;top:104px;width:70px;height:19px;background:#d9d9d9;border-left:1px solid #fff"></div>
<div class="t" style="left:416px;top:108px;width:70px;text-align:center"><span class="s c">Connect List</span></div>
<div class="a" style="left:487px;top:104px;width:86px;height:19px;background:#d9d9d9;border-left:1px solid #fff"></div>
<div class="t" style="left:487px;top:108px;width:86px;text-align:center"><span class="s c">Security Profiles</span></div>
<div class="a" style="left:574px;top:104px;width:56px;height:19px;background:#d9d9d9;border-left:1px solid #fff"></div>
<div class="t" style="left:574px;top:108px;width:56px;text-align:center"><span class="s c">Channels</span></div>
<div class="a" style="left:208px;top:123px;width:855px;height:1px;background:#fff"></div>
<div class="btn" style="left:147px;top:127px;width:31px;height:23px;line-height:21px;padding-top:1px"></div>
<div class="btn" style="left:181px;top:127px;width:23px;height:23px;line-height:21px;padding-top:1px"></div>
<div class="btn" style="left:213px;top:127px;width:23px;height:23px;line-height:21px;padding-top:1px"></div>
<div class="btn" style="left:239px;top:127px;width:23px;height:23px;line-height:21px;padding-top:1px"></div>
<div class="btn" style="left:271px;top:127px;width:23px;height:23px;line-height:21px;padding-top:1px"></div>
<div class="btn" style="left:303px;top:127px;width:23px;height:23px;line-height:21px;padding-top:1px"></div>
<div class="btn" style="left:335px;top:127px;width:59px;height:23px;line-height:21px;padding-top:1px"><span class="s c">CAP</span></div>
<div class="btn" style="left:397px;top:127px;width:59px;height:23px;line-height:21px;padding-top:1px"><span class="s c">Scanner</span></div>
<div class="btn" style="left:459px;top:127px;width:77px;height:23px;line-height:21px;padding-top:1px"><span class="s c">Freq. Usage</span></div>
<div class="btn" style="left:539px;top:127px;width:65px;height:23px;line-height:21px;padding-top:1px"><span class="s c">Alignment</span></div>
<div class="btn" style="left:607px;top:127px;width:92px;height:23px;line-height:21px;padding-top:1px"><span class="s c">Wireless Sniffer</span></div>
<div class="btn" style="left:702px;top:127px;width:102px;height:23px;line-height:21px;padding-top:1px"><span class="s c">Wireless Snooper</span></div>
<svg style="left:153px;top:133px" width="24" height="13"><path d="M6 0v12M0 6h12" stroke="#000" stroke-width="4"/><path d="M6 1v10M1 6h10" stroke="#0000ff" stroke-width="2"/><path d="M14 4h7l-3.5 4z" fill="#000"/></svg>
<svg style="left:185px;top:133px" width="16" height="12"><rect x="1.5" y="4.5" width="12" height="3" fill="#f4f4f4" stroke="#b0b0b0"/></svg>
<svg style="left:217px;top:132px" width="16" height="14"><path d="M2 6.5 L5.5 10.5 L13 2.5" stroke="#0000c0" stroke-width="2.6" fill="none"/></svg>
<svg style="left:243px;top:132px" width="16" height="14"><path d="M3 2.5 L12 11.5 M12 2.5 L3 11.5" stroke="#e00000" stroke-width="2.6"/></svg>
<svg style="left:275px;top:133px" width="16" height="13"><path d="M1.5 4.5 L4.5 1.5 H13.5 V10.5 H1.5z" fill="#ffff00" stroke="#000" stroke-width="1.1" stroke-linejoin="round"/><circle cx="3.6" cy="3.6" r=".8" fill="#d8c000"/><path d="M6 3.6h6M2.5 5.6h9.5" stroke="#a8a8c0" stroke-width=".9" stroke-dasharray="1.6 .9"/></svg>
<svg style="left:307px;top:131px" width="16" height="16"><defs><linearGradient id="fg" x1="0" x2="1"><stop offset="0" stop-color="#6a78b0"/><stop offset=".5" stop-color="#c8d0ec"/><stop offset="1" stop-color="#7a88c0"/></linearGradient></defs><path d="M2.2 2.2 H13.8 L9.8 7.6 V14.4 H6.6 V7.6z" fill="url(#fg)" stroke="#000" stroke-width="1.2" stroke-linejoin="round"/><path d="M2.5 2.6 H13.5" stroke="#000" stroke-width="1.6"/></svg>
<div class="a" style="left:1001px;top:132px;width:59px;height:18px;border:1px solid #b8b8b8;background:#fff;color:#a0a0a0;font-style:italic;padding-left:5px;line-height:16px;font-size:11px">Find</div>
<div class="a" style="left:147px;top:153px;width:915px;height:679px;background:#fff;border-left:1px solid #a0a0a0;border-top:1px solid #a0a0a0;border-right:1px solid #a0a0a0"></div>
<div class="a" style="left:148px;top:154px;width:913px;height:16px;background:#f0f0f0;border-top:1px solid #fff"></div>
<div class="a" style="left:148px;top:170px;width:913px;height:1px;background:#a0a0a0"></div>
<div class="a" style="left:187px;top:154px;width:1px;height:16px;background:#a0a0a0"></div>
<div class="a" style="left:188px;top:155px;width:1px;height:15px;background:#fff"></div>
<div class="a" style="left:287px;top:154px;width:1px;height:16px;background:#a0a0a0"></div>
<div class="a" style="left:288px;top:155px;width:1px;height:15px;background:#fff"></div>
<div class="a" style="left:442px;top:154px;width:1px;height:16px;background:#a0a0a0"></div>
<div class="a" style="left:443px;top:155px;width:1px;height:15px;background:#fff"></div>
<div class="a" style="left:561px;top:154px;width:1px;height:16px;background:#a0a0a0"></div>
<div class="a" style="left:562px;top:155px;width:1px;height:15px;background:#fff"></div>
<div class="a" style="left:682px;top:154px;width:1px;height:16px;background:#a0a0a0"></div>
<div class="a" style="left:683px;top:155px;width:1px;height:15px;background:#fff"></div>
<div class="a" style="left:782px;top:154px;width:1px;height:16px;background:#a0a0a0"></div>
<div class="a" style="left:783px;top:155px;width:1px;height:15px;background:#fff"></div>
<div class="a" style="left:882px;top:154px;width:1px;height:16px;background:#a0a0a0"></div>
<div class="a" style="left:883px;top:155px;width:1px;height:15px;background:#fff"></div>
<div class="a" style="left:1002px;top:154px;width:1px;height:16px;background:#a0a0a0"></div>
<div class="a" style="left:1003px;top:155px;width:1px;height:15px;background:#fff"></div>
<div class="a" style="left:1045px;top:154px;width:1px;height:16px;background:#a0a0a0"></div>
<div class="a" style="left:1046px;top:155px;width:1px;height:15px;background:#fff"></div>
<div class="a" style="left:187px;top:171px;width:1px;height:15px;background:#dcdcdc"></div>
<div class="a" style="left:287px;top:171px;width:1px;height:15px;background:#dcdcdc"></div>
<div class="a" style="left:442px;top:171px;width:1px;height:15px;background:#dcdcdc"></div>
<div class="a" style="left:561px;top:171px;width:1px;height:15px;background:#dcdcdc"></div>
<div class="a" style="left:682px;top:171px;width:1px;height:15px;background:#dcdcdc"></div>
<div class="a" style="left:782px;top:171px;width:1px;height:15px;background:#dcdcdc"></div>
<div class="a" style="left:882px;top:171px;width:1px;height:15px;background:#dcdcdc"></div>
<div class="a" style="left:1002px;top:171px;width:1px;height:15px;background:#dcdcdc"></div>
<div class="t" style="left:190px;top:157px;"><span class="s l">Name</span></div>
<div class="t" style="left:290px;top:157px;"><span class="s l">Type</span></div>
<svg style="left:276px;top:159px" width="10" height="9"><path d="M4.6 1.4 L8.6 6.9 H1.2" stroke="#fff" stroke-width="1.1" fill="none"/><path d="M4.6 1.4 L1.2 6.9" stroke="#808080" stroke-width="1.1"/></svg>
<div class="t" style="left:445px;top:157px;"><span class="s l">T</span></div>
<div class="t" style="left:565px;top:157px;"><span class="s l">R</span></div>
<div class="t" style="left:686px;top:157px;"><span class="s l">Tx Packet (p/s)</span></div>
<div class="t" style="left:786px;top:157px;"><span class="s l">Rx Packet (p/s)</span></div>
<div class="t" style="left:886px;top:157px;"><span class="s l">FP Tx</span></div>
<div class="t" style="left:1005px;top:157px;"><span class="s l">FP Rx</span></div>
<svg style="left:1048px;top:159px" width="11" height="7"><path d="M0.5 0.5h10l-5 5.5z" fill="#000"/></svg>
<div class="t" style="left:150px;top:172px;"><span class="s l">S</span></div>
<div class="t" style="left:206px;top:172px;"><span class="s l">wlan1</span></div>
<div class="t" style="left:290px;top:172px;"><span class="s l">Wireless (Atheros AR9300)</span></div>
<div class="t" style="left:944px;top:172px;width:56px;text-align:right"><span class="s r">0 bps</span></div>
<div class="a" style="left:148px;top:186px;width:913px;height:14px;background:#a0c2ea"></div>
<div class="a" style="left:187px;top:186px;width:1px;height:14px;background:#e4ecf6"></div>
<div class="a" style="left:287px;top:186px;width:1px;height:14px;background:#e4ecf6"></div>
<div class="a" style="left:442px;top:186px;width:1px;height:14px;background:#e4ecf6"></div>
<div class="a" style="left:561px;top:186px;width:1px;height:14px;background:#e4ecf6"></div>
<div class="a" style="left:682px;top:186px;width:1px;height:14px;background:#e4ecf6"></div>
<div class="a" style="left:782px;top:186px;width:1px;height:14px;background:#e4ecf6"></div>
<div class="a" style="left:882px;top:186px;width:1px;height:14px;background:#e4ecf6"></div>
<div class="a" style="left:1002px;top:186px;width:1px;height:14px;background:#e4ecf6"></div>
<div class="t" style="left:150px;top:187px;color:#808080"><span class="s l">XS</span></div>
<div class="t" style="left:206px;top:187px;color:#808080"><span class="s l">wlan2-gateway</span></div>
<div class="t" style="left:290px;top:187px;color:#808080"><span class="s l">Wireless (Atheros AR9888)</span></div>
<div class="t" style="left:944px;top:187px;width:56px;text-align:right;color:#808080"><span class="s r">0 bps</span></div>
<svg style="left:190px;top:171px" width="16" height="13"><path d="M6 3.2 L2.6 6.5 L6 9.8 M10 3.2 L13.4 6.5 L10 9.8 M3 6.5 H13" stroke="#00f0f8" stroke-width="2.2" fill="none"/><path d="M6.5 0.8 L1 6.5 L6.5 12.2 M9.5 0.8 L15 6.5 L9.5 12.2" stroke="#000" stroke-width="1.1" fill="none"/><path d="M6.5 0.8V12.2 M9.5 0.8V12.2" stroke="#000" stroke-width="1.3"/><path d="M4 6.5 H12" stroke="#000" stroke-width="1" stroke-dasharray="1 1"/></svg>
<svg style="left:190px;top:186px" width="16" height="13"><path d="M6.5 0.8 L1 6.5 L6.5 12.2 M9.5 0.8 L15 6.5 L9.5 12.2" stroke="#a8a8b0" stroke-width="1.1" fill="none"/><path d="M6 3.2 L2.6 6.5 L6 9.8 M10 3.2 L13.4 6.5 L10 9.8 M3 6.5 H13 M6.5 0.8V12.2 M9.5 0.8V12.2" stroke="#fff" stroke-width="1.1" fill="none" stroke-dasharray="1.2 .8"/></svg>
<div class="a" style="left:148px;top:831px;width:913px;height:17px;background:#d4d4d4;border-top:1px solid #a0a0a0;border-bottom:1px solid #a0a0a0"></div>
<div class="a" style="left:148px;top:832px;width:15px;height:15px;background:#f0f0f0"></div>
<div class="a" style="left:163px;top:832px;width:1px;height:15px;background:#a0a0a0"></div>
<div class="a" style="left:164px;top:832px;width:240px;height:15px;background:#f0f0f0"></div>
<div class="a" style="left:1045px;top:832px;width:16px;height:15px;background:#f0f0f0;border-left:1px solid #a0a0a0"></div>
<svg style="left:152px;top:835px" width="10" height="10"><path d="M1 5 L5 1 V3.5 H8 V6.5 H5 V9z" fill="#000"/></svg>
<svg style="left:1049px;top:835px" width="10" height="10"><path d="M9 5 L5 1 V3.5 H2 V6.5 H5 V9z" fill="#000"/></svg>
<div class="a" style="left:147px;top:848px;width:1px;height:19px;background:#a0a0a0"></div>
<div class="t" style="left:150px;top:851px;"><span class="s l">2 items out of 4 (1 selected)</span></div>
<div class="a" style="left:402px;top:160px;width:523px;height:689px;border-left:1px solid #fff;border-top:1px solid #fff"></div>
<div class="a" style="left:403px;top:161px;width:522px;height:687px;background:#f0f0f0;border:1px solid #000"></div>
<div class="a" style="left:404px;top:162px;width:520px;height:22px;background:#4e4ece;border-left:1px solid #8888f0;border-top:1px solid #8888f0"></div>
<div class="t" style="left:409px;top:169px;color:#fff"><span class="s l">Interface &lt;wlan2-gateway&gt;</span></div>
<div class="a" style="left:888px;top:166px;width:15px;height:15px;background:#ece9ec;border:1px solid #333"><div class="a" style="left:2.5px;top:2.5px;width:8px;height:8px;border:1px solid #333;border-top-width:2px"></div></div>
<div class="a" style="left:905px;top:166px;width:15px;height:15px;background:#ece9ec;border:1px solid #333"></div>
<svg style="left:908px;top:169px" width="9" height="9"><path d="M1.5 1.5 L7.5 7.5 M7.5 1.5 L1.5 7.5" stroke="#333" stroke-width="1.8"/></svg>
<div class="a" style="left:409px;top:189px;width:46px;height:19px;background:#d9d9d9"></div>
<div class="t" style="left:409px;top:193px;width:46px;text-align:center"><span class="s c">General</span></div>
<div class="a" style="left:455px;top:186px;width:56px;height:23px;background:#f0f0f0;border-left:1px solid #fff;border-top:1px solid #fff;border-right:1px solid #a0a0a0"></div>
<div class="t" style="left:455px;top:191px;width:56px;text-align:center"><span class="s c">Wireless</span></div>
<div class="a" style="left:511px;top:189px;width:25px;height:19px;background:#d9d9d9"></div>
<div class="t" style="left:511px;top:193px;width:25px;text-align:center"><span class="s c">HT</span></div>
<div class="a" style="left:537px;top:189px;width:52px;height:19px;background:#d9d9d9"></div>
<div class="t" style="left:537px;top:193px;width:52px;text-align:center"><span class="s c">HT MCS</span></div>
<div class="a" style="left:590px;top:189px;width:37px;height:19px;background:#d9d9d9"></div>
<div class="t" style="left:590px;top:193px;width:37px;text-align:center"><span class="s c">WDS</span></div>
<div class="a" style="left:628px;top:189px;width:52px;height:19px;background:#d9d9d9"></div>
<div class="t" style="left:628px;top:193px;width:52px;text-align:center"><span class="s c">Nstreme</span></div>
<div class="a" style="left:681px;top:189px;width:31px;height:19px;background:#d9d9d9"></div>
<div class="t" style="left:681px;top:193px;width:31px;text-align:center"><span class="s c">NV2</span></div>
<div class="a" style="left:713px;top:189px;width:40px;height:19px;background:#d9d9d9"></div>
<div class="t" style="left:713px;top:193px;width:40px;text-align:center"><span class="s c">Status</span></div>
<div class="a" style="left:754px;top:189px;width:20px;height:19px;background:#d9d9d9"></div>
<div class="t" style="left:754px;top:193px;width:20px;text-align:center"><span class="s c">...</span></div>
<div class="a" style="left:406px;top:208px;width:390px;height:615px;border-left:1px solid #fff;border-top:1px solid #fff;border-right:1px solid #a0a0a0;border-bottom:1px solid #a0a0a0"></div>
<div class="a" style="left:511px;top:208px;width:284px;height:1px;background:#fff"></div>
<div class="t" style="left:300px;top:220px;width:222px;text-align:right"><span class="s r">Mode:</span></div>
<div class="a" style="left:528px;top:216px;width:239px;height:18px;border:1px solid #9a9a9a;background:#fff;padding:1px 0 0 1px;line-height:16px;white-space:nowrap"><span style="background:#3399ff;color:#fff;display:block;width:235px;height:14px;margin-top:0px;line-height:15px"><span class="s l">bridge</span></span></div>
<div class="a" style="left:768px;top:216px;width:18px;height:18px;border:1px solid #9a9a9a;background:#f0f0f0;box-shadow:inset 1px 1px 0 #fff,0 0 0 1px #f8f8f8"></div>
<svg style="left:768px;top:216px" width="18" height="18"><rect x="5" y="5" width="7.5" height="1.2" fill="#000"/><rect x="7.2" y="7" width="3" height="3" fill="#000"/><path d="M4.8 9.3 H12.7 L8.75 13.3z" fill="#000"/></svg>
<div class="t" style="left:300px;top:245px;width:222px;text-align:right"><span class="s r">Band:</span></div>
<div class="a" style="left:528px;top:241px;width:239px;height:18px;border:1px solid #9a9a9a;background:#fff;padding:1px 0 0 1px;line-height:16px;white-space:nowrap"><span class="s l">5GHz-only-N</span></div>
<div class="a" style="left:768px;top:241px;width:18px;height:18px;border:1px solid #9a9a9a;background:#f0f0f0;box-shadow:inset 1px 1px 0 #fff,0 0 0 1px #f8f8f8"></div>
<svg style="left:768px;top:241px" width="18" height="18"><rect x="5" y="5" width="7.5" height="1.2" fill="#000"/><rect x="7.2" y="7" width="3" height="3" fill="#000"/><path d="M4.8 9.3 H12.7 L8.75 13.3z" fill="#000"/></svg>
<div class="t" style="left:300px;top:270px;width:222px;text-align:right"><span class="s r">Channel Width:</span></div>
<div class="a" style="left:528px;top:266px;width:239px;height:18px;border:1px solid #9a9a9a;background:#fff;padding:1px 0 0 1px;line-height:16px;white-space:nowrap"><span class="s l">20/40MHz Ce</span></div>
<div class="a" style="left:768px;top:266px;width:18px;height:18px;border:1px solid #9a9a9a;background:#f0f0f0;box-shadow:inset 1px 1px 0 #fff,0 0 0 1px #f8f8f8"></div>
<svg style="left:768px;top:266px" width="18" height="18"><rect x="5" y="5" width="7.5" height="1.2" fill="#000"/><rect x="7.2" y="7" width="3" height="3" fill="#000"/><path d="M4.8 9.3 H12.7 L8.75 13.3z" fill="#000"/></svg>
<div class="t" style="left:300px;top:295px;width:222px;text-align:right"><span class="s r">Frequency:</span></div>
<div class="a" style="left:528px;top:291px;width:210px;height:18px;border:1px solid #9a9a9a;background:#fff;padding:1px 0 0 1px;line-height:16px;white-space:nowrap"><span class="s l">5745</span></div>
<div class="a" style="left:739px;top:291px;width:18px;height:18px;border:1px solid #9a9a9a;background:#f0f0f0;box-shadow:inset 1px 1px 0 #fff,0 0 0 1px #f8f8f8"></div>
<svg style="left:739px;top:291px" width="18" height="18"><rect x="5" y="5" width="7.5" height="1.2" fill="#000"/><rect x="7.2" y="7" width="3" height="3" fill="#000"/><path d="M4.8 9.3 H12.7 L8.75 13.3z" fill="#000"/></svg>
<div class="t" style="left:762px;top:295px;"><span class="s l">MHz</span></div>
<div class="t" style="left:300px;top:321px;width:222px;text-align:right"><span class="s r">SSID:</span></div>
<div class="a" style="left:528px;top:317px;width:240px;height:18px;border:1px solid #9a9a9a;background:#fff;padding:1px 0 0 1px;line-height:16px;white-space:nowrap"><span class="s l">LanMarket-Bridge-5</span></div>
<svg style="left:772px;top:322px" width="11" height="7"><path d="M0.5 6 L5.5 0.5 L10.5 6z" fill="#000"/></svg>
<div class="t" style="left:300px;top:347px;width:222px;text-align:right"><span class="s r">Scan List:</span></div>
<div class="a" style="left:528px;top:343px;width:221px;height:18px;border:1px solid #9a9a9a;background:#fff;padding:1px 0 0 1px;line-height:16px;white-space:nowrap"><span class="s l">default</span></div>
<div class="a" style="left:750px;top:343px;width:18px;height:18px;border:1px solid #9a9a9a;background:#f0f0f0;box-shadow:inset 1px 1px 0 #fff,0 0 0 1px #f8f8f8"></div>
<svg style="left:750px;top:343px" width="18" height="18"><rect x="5" y="5" width="7.5" height="1.2" fill="#000"/><rect x="7.2" y="7" width="3" height="3" fill="#000"/><path d="M4.8 9.3 H12.7 L8.75 13.3z" fill="#000"/></svg>
<svg style="left:772px;top:346px" width="11" height="13"><path d="M0.5 5.5 L5.5 0.5 L10.5 5.5z M0.5 7.5 L5.5 12.5 L10.5 7.5z" fill="#000"/></svg>
<div class="t" style="left:300px;top:372px;width:222px;text-align:right"><span class="s r">Wireless Protocol:</span></div>
<div class="a" style="left:528px;top:368px;width:239px;height:18px;border:1px solid #9a9a9a;background:#fff;padding:1px 0 0 1px;line-height:16px;white-space:nowrap"><span class="s l">nv2</span></div>
<div class="a" style="left:768px;top:368px;width:18px;height:18px;border:1px solid #9a9a9a;background:#f0f0f0;box-shadow:inset 1px 1px 0 #fff,0 0 0 1px #f8f8f8"></div>
<svg style="left:768px;top:368px" width="18" height="18"><rect x="5" y="5" width="7.5" height="1.2" fill="#000"/><rect x="7.2" y="7" width="3" height="3" fill="#000"/><path d="M4.8 9.3 H12.7 L8.75 13.3z" fill="#000"/></svg>
<div class="t" style="left:300px;top:397px;width:222px;text-align:right"><span class="s r">Security Profile:</span></div>
<div class="a" style="left:528px;top:393px;width:239px;height:18px;border:1px solid #9a9a9a;background:#fff;padding:1px 0 0 1px;line-height:16px;white-space:nowrap"><span class="s l">default</span></div>
<div class="a" style="left:768px;top:393px;width:18px;height:18px;border:1px solid #9a9a9a;background:#f0f0f0;box-shadow:inset 1px 1px 0 #fff,0 0 0 1px #f8f8f8"></div>
<svg style="left:768px;top:393px" width="18" height="18"><rect x="5" y="5" width="7.5" height="1.2" fill="#000"/><rect x="7.2" y="7" width="3" height="3" fill="#000"/><path d="M4.8 9.3 H12.7 L8.75 13.3z" fill="#000"/></svg>
<div class="t" style="left:300px;top:422px;width:222px;text-align:right"><span class="s r">WPS Mode:</span></div>
<div class="a" style="left:528px;top:418px;width:239px;height:18px;border:1px solid #9a9a9a;background:#fff;padding:1px 0 0 1px;line-height:16px;white-space:nowrap"><span class="s l">push button</span></div>
<div class="a" style="left:768px;top:418px;width:18px;height:18px;border:1px solid #9a9a9a;background:#f0f0f0;box-shadow:inset 1px 1px 0 #fff,0 0 0 1px #f8f8f8"></div>
<svg style="left:768px;top:418px" width="18" height="18"><rect x="5" y="5" width="7.5" height="1.2" fill="#000"/><rect x="7.2" y="7" width="3" height="3" fill="#000"/><path d="M4.8 9.3 H12.7 L8.75 13.3z" fill="#000"/></svg>
<div class="t" style="left:300px;top:447px;width:222px;text-align:right"><span class="s r">Bridge Mode:</span></div>
<div class="a" style="left:528px;top:443px;width:239px;height:18px;border:1px solid #9a9a9a;background:#fff;padding:1px 0 0 1px;line-height:16px;white-space:nowrap"><span class="s l">enabled</span></div>
<div class="a" style="left:768px;top:443px;width:18px;height:18px;border:1px solid #9a9a9a;background:#f0f0f0;box-shadow:inset 1px 1px 0 #fff,0 0 0 1px #f8f8f8"></div>
<svg style="left:768px;top:443px" width="18" height="18"><rect x="5" y="5" width="7.5" height="1.2" fill="#000"/><rect x="7.2" y="7" width="3" height="3" fill="#000"/><path d="M4.8 9.3 H12.7 L8.75 13.3z" fill="#000"/></svg>
<div class="t" style="left:300px;top:482px;width:222px;text-align:right"><span class="s r">VLAN Mode:</span></div>
<div class="a" style="left:528px;top:478px;width:239px;height:18px;border:1px solid #9a9a9a;background:#fff;padding:1px 0 0 1px;line-height:16px;white-space:nowrap"><span class="s l">no tag</span></div>
<div class="a" style="left:768px;top:478px;width:18px;height:18px;border:1px solid #9a9a9a;background:#f0f0f0;box-shadow:inset 1px 1px 0 #fff,0 0 0 1px #f8f8f8"></div>
<svg style="left:768px;top:478px" width="18" height="18"><rect x="5" y="5" width="7.5" height="1.2" fill="#000"/><rect x="7.2" y="7" width="3" height="3" fill="#000"/><path d="M4.8 9.3 H12.7 L8.75 13.3z" fill="#000"/></svg>
<div class="t" style="left:300px;top:507px;width:222px;text-align:right"><span class="s r">VLAN ID:</span></div>
<div class="a" style="left:528px;top:503px;width:258px;height:18px;border:1px solid #9a9a9a;background:#fff;padding:1px 0 0 1px;line-height:16px;white-space:nowrap"><span class="s l">1</span></div>
<div class="t" style="left:300px;top:543px;width:222px;text-align:right"><span class="s r">Default AP Tx Rate:</span></div>
<div class="a" style="left:528px;top:539px;width:211px;height:18px;border:1px solid #9a9a9a;background:#f0f0f0;padding:1px 0 0 1px;line-height:16px;white-space:nowrap"></div>
<svg style="left:743px;top:545px" width="12" height="8"><path d="M0.6 0 H10.4 L5.5 5.4z" fill="#000"/></svg>
<div class="t" style="left:766px;top:543px;"><span class="s l">bps</span></div>
<div class="t" style="left:300px;top:569px;width:222px;text-align:right"><span class="s r">Default Client Tx Rate:</span></div>
<div class="a" style="left:528px;top:565px;width:211px;height:18px;border:1px solid #9a9a9a;background:#f0f0f0;padding:1px 0 0 1px;line-height:16px;white-space:nowrap"></div>
<svg style="left:743px;top:571px" width="12" height="8"><path d="M0.6 0 H10.4 L5.5 5.4z" fill="#000"/></svg>
<div class="t" style="left:766px;top:569px;"><span class="s l">bps</span></div>
<div class="a" style="left:415px;top:470px;width:371px;height:1px;background:#d8d8d8"></div>
<div class="a" style="left:415px;top:471px;width:371px;height:1px;background:#fcfcfc"></div>
<div class="a" style="left:415px;top:530px;width:371px;height:1px;background:#d8d8d8"></div>
<div class="a" style="left:415px;top:531px;width:371px;height:1px;background:#fcfcfc"></div>
<div class="a" style="left:415px;top:592px;width:371px;height:1px;background:#d8d8d8"></div>
<div class="a" style="left:415px;top:593px;width:371px;height:1px;background:#fcfcfc"></div>
<div class="a" style="left:528px;top:600px;width:12px;height:12px;border:1px solid #8a8a8a;background:#fff"></div>
<svg style="left:528px;top:600px" width="12" height="12"><path d="M3 5.6 L4.9 7.8 L8.8 3.4" stroke="#000" stroke-width="2" fill="none"/></svg>
<div class="t" style="left:544px;top:601px;"><span class="s l">Default Authenticate</span></div>
<div class="a" style="left:528px;top:620px;width:12px;height:12px;border:1px solid #8a8a8a;background:#fff"></div>
<svg style="left:528px;top:620px" width="12" height="12"><path d="M3 5.6 L4.9 7.8 L8.8 3.4" stroke="#000" stroke-width="2" fill="none"/></svg>
<div class="t" style="left:544px;top:621px;"><span class="s l">Default Forward</span></div>
<div class="btn" style="left:805px;top:201px;width:112px;height:23px;line-height:21px;border-color:#000;padding-top:1px"><span class="s c">OK</span></div>
<div class="btn" style="left:805px;top:227px;width:112px;height:23px;line-height:21px;border-color:#7a7a7a;padding-top:1px"><span class="s c">Cancel</span></div>
<div class="btn" style="left:805px;top:253px;width:112px;height:23px;line-height:21px;border-color:#7a7a7a;padding-top:1px"><span class="s c">Apply</span></div>
<div class="btn" style="left:805px;top:285px;width:112px;height:23px;line-height:21px;border-color:#7a7a7a;padding-top:1px"><span class="s c">Enable</span></div>
<div class="btn" style="left:805px;top:311px;width:112px;height:23px;line-height:21px;border-color:#7a7a7a;padding-top:1px"><span class="s c">Comment</span></div>
<div class="btn" style="left:805px;top:343px;width:112px;height:23px;line-height:21px;border-color:#7a7a7a;padding-top:1px"><span class="s c">Advanced Mode</span></div>
<div class="btn" style="left:805px;top:369px;width:112px;height:23px;line-height:21px;border-color:#7a7a7a;padding-top:1px"><span class="s c">Torch</span></div>
<div class="btn" style="left:805px;top:395px;width:112px;height:23px;line-height:21px;border-color:#7a7a7a;padding-top:1px"><span class="s c">WPS Accept</span></div>
<div class="btn" style="left:805px;top:421px;width:112px;height:23px;line-height:21px;border-color:#7a7a7a;padding-top:1px"><span class="s c">Scan...</span></div>
<div class="btn" style="left:805px;top:447px;width:112px;height:23px;line-height:21px;border-color:#7a7a7a;padding-top:1px"><span class="s c">Freq. Usage...</span></div>
<div class="btn" style="left:805px;top:473px;width:112px;height:23px;line-height:21px;border-color:#7a7a7a;padding-top:1px"><span class="s c">Align...</span></div>
<div class="btn" style="left:805px;top:499px;width:112px;height:23px;line-height:21px;border-color:#7a7a7a;padding-top:1px"><span class="s c">Sniff...</span></div>
<div class="btn" style="left:805px;top:525px;width:112px;height:23px;line-height:21px;border-color:#7a7a7a;padding-top:1px"><span class="s c">Snooper...</span></div>
<div class="btn" style="left:805px;top:551px;width:112px;height:23px;line-height:21px;border-color:#7a7a7a;padding-top:1px"><span class="s c">Reset Configuration</span></div>
<div class="a" style="left:406px;top:824px;width:102px;height:19px;border-left:1px solid #a0a0a0;border-top:1px solid #a0a0a0;border-right:1px solid #fafafa;border-bottom:1px solid #fafafa;color:#000;padding-left:2px;padding-top:1px;line-height:17px;white-space:nowrap"><span class="s l">disabled</span></div>
<div class="a" style="left:511px;top:824px;width:102px;height:19px;border-left:1px solid #a0a0a0;border-top:1px solid #a0a0a0;border-right:1px solid #fafafa;border-bottom:1px solid #fafafa;color:#a0a0a0;padding-left:2px;padding-top:1px;line-height:17px;white-space:nowrap"><span class="s l">running</span></div>
<div class="a" style="left:615px;top:824px;width:103px;height:19px;border-left:1px solid #a0a0a0;border-top:1px solid #a0a0a0;border-right:1px solid #fafafa;border-bottom:1px solid #fafafa;color:#000;padding-left:2px;padding-top:1px;line-height:17px;white-space:nowrap"><span class="s l">slave</span></div>
<div class="a" style="left:719px;top:824px;width:89px;height:19px;border-left:1px solid #a0a0a0;border-top:1px solid #a0a0a0;border-right:1px solid #fafafa;border-bottom:1px solid #fafafa;color:#000;padding-left:2px;padding-top:1px;line-height:17px;white-space:nowrap"><span class="s l">disabled</span></div>
<div class="a" style="left:811px;top:824px;width:107px;height:19px;border-left:1px solid #a0a0a0;border-top:1px solid #a0a0a0;border-right:1px solid #fafafa;border-bottom:1px solid #fafafa;color:#000;padding-left:2px;padding-top:1px;line-height:17px;white-space:nowrap"></div>
</body></html>
